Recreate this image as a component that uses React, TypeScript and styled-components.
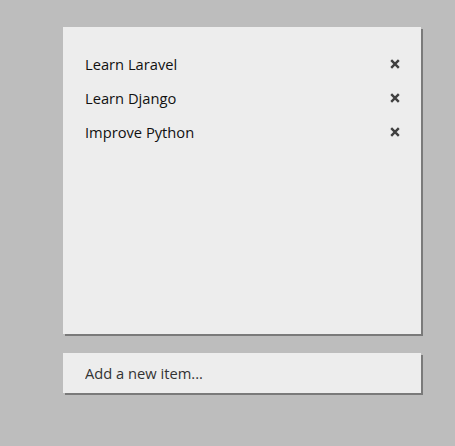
import React from "react";
import styled, { createGlobalStyle } from "styled-components";

const Global = createGlobalStyle`
  html, body { margin: 0; padding: 0; background: #bdbdbd; }
  body { font-family: "Open Sans", "Liberation Sans", sans-serif; }
`;

const Page = styled.div`
  display: flex;
  flex-direction: column;
  align-items: flex-start;
  gap: 19px;
  padding: 27px 0 40px 63px;
`;

const Panel = styled.div`
  width: 358px;
  height: 307px;
  box-sizing: border-box;
  background: #ededed;
  box-shadow: 2px 2px 0 #7a7a7a;
  padding: 20px 0 0 0;
  display: flex;
  flex-direction: column;
`;

const Row = styled.div`
  display: flex;
  align-items: center;
  justify-content: space-between;
  height: 34px;
  padding: 0 20px 0 22px;
  font-size: 14.7px;
  color: #111;
`;

const Remove = styled.button`
  border: 0;
  background: none;
  padding: 0;
  width: 12px;
  height: 12px;
  display: flex;
  align-items: center;
  justify-content: center;
  cursor: pointer;
`;

const InputWrap = styled.div`
  width: 358px;
  height: 40px;
  background: #ededed;
  box-shadow: 2px 2px 0 #7a7a7a;
  display: flex;
`;

const InputBox = styled.input`
  flex: 1;
  min-width: 0;
  border: 0;
  outline: none;
  background: transparent;
  padding: 0 22px;
  font-family: "Open Sans", "Liberation Sans", sans-serif;
  font-size: 14.7px;
  color: #222;
  &::placeholder { color: #333; opacity: 1; }
`;

const Cross = () => (
  <svg width="10" height="10" viewBox="0 0 10 10">
    <path d="M1.2 1.2 L8.8 8.8 M8.8 1.2 L1.2 8.8" stroke="#404040" strokeWidth="2.4" strokeLinecap="butt" />
  </svg>
);

const items = ["Learn Laravel", "Learn Django", "Improve Python"];

export default function App() {
  return (
    <>
      <Global />
      <Page>
        <Panel>
          {items.map((t) => (
            <Row key={t}>
              <span>{t}</span>
              <Remove aria-label="remove"><Cross /></Remove>
            </Row>
          ))}
        </Panel>
        <InputWrap>
          <InputBox placeholder="Add a new item..." />
        </InputWrap>
      </Page>
    </>
  );
}
